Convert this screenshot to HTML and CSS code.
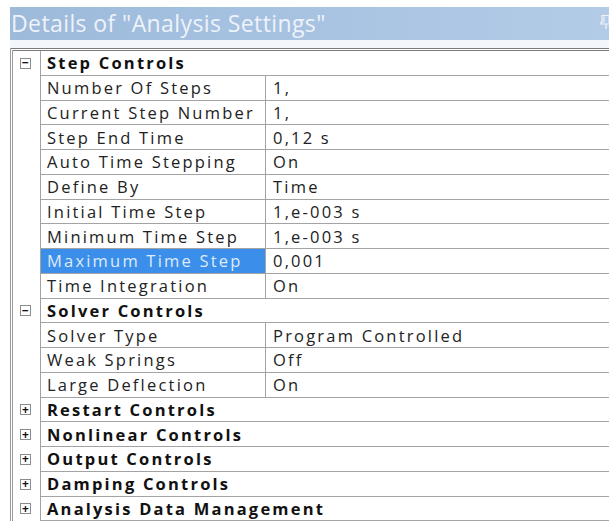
FILE: index.html
```html
<!DOCTYPE html>
<html>
<head>
<meta charset="utf-8">
<link rel="stylesheet" href="styles.css">
</head>
<body>
<div class="panel">
  <div class="titlebar">
    <span class="title">Details of "Analysis Settings"</span>
    <svg class="pin" width="14" height="16" viewBox="0 0 14 16">
      <path d="M3 1.5h7v7h2v1.5H2V8.5h1z M5 2.5v6" fill="none" stroke="#eef3fa" stroke-width="1.2"/>
      <path d="M7 10v5" stroke="#eef3fa" stroke-width="1.2"/>
    </svg>
  </div>
  <div class="strip"></div>
  <div class="grid">
    <div class="row group"><div class="exp"><span class="box">&minus;</span></div><div class="head">Step Controls</div></div>
    <div class="row"><div class="exp"></div><div class="name">Number Of Steps</div><div class="value">1,</div></div>
    <div class="row"><div class="exp"></div><div class="name">Current Step Number</div><div class="value">1,</div></div>
    <div class="row"><div class="exp"></div><div class="name">Step End Time</div><div class="value">0,12 s</div></div>
    <div class="row"><div class="exp"></div><div class="name">Auto Time Stepping</div><div class="value">On</div></div>
    <div class="row"><div class="exp"></div><div class="name">Define By</div><div class="value">Time</div></div>
    <div class="row"><div class="exp"></div><div class="name">Initial Time Step</div><div class="value">1,e-003 s</div></div>
    <div class="row"><div class="exp"></div><div class="name">Minimum Time Step</div><div class="value">1,e-003 s</div></div>
    <div class="row"><div class="exp"></div><div class="name selected">Maximum Time Step</div><div class="value">0,001</div></div>
    <div class="row"><div class="exp"></div><div class="name">Time Integration</div><div class="value">On</div></div>
    <div class="row group"><div class="exp"><span class="box">&minus;</span></div><div class="head">Solver Controls</div></div>
    <div class="row"><div class="exp"></div><div class="name">Solver Type</div><div class="value">Program Controlled</div></div>
    <div class="row"><div class="exp"></div><div class="name">Weak Springs</div><div class="value">Off</div></div>
    <div class="row"><div class="exp"></div><div class="name">Large Deflection</div><div class="value">On</div></div>
    <div class="row group"><div class="exp"><span class="box">+</span></div><div class="head">Restart Controls</div></div>
    <div class="row group"><div class="exp"><span class="box">+</span></div><div class="head">Nonlinear Controls</div></div>
    <div class="row group"><div class="exp"><span class="box">+</span></div><div class="head">Output Controls</div></div>
    <div class="row group"><div class="exp"><span class="box">+</span></div><div class="head">Damping Controls</div></div>
    <div class="row group"><div class="exp"><span class="box">+</span></div><div class="head">Analysis Data Management</div></div>
  </div>
</div>
</body>
</html>
```
FILE: styles.css
```css
html, body {
  margin: 0;
  padding: 0;
  background: #ffffff;
  overflow: hidden;
}

.panel {
  padding: 7px 0 0 10px;
  font-family: "Open Sans", "Noto Sans", sans-serif;
}

.titlebar {
  height: 33px;
  display: flex;
  align-items: center;
  justify-content: space-between;
  background: linear-gradient(90deg, #9dbadb 0%, #a8c3e2 50%, #b3cbe6 100%);
}

.title {
  font-size: 23px;
  color: #eef3f9;
  padding-left: 1px;
  letter-spacing: 0.4px;
  margin-top: -2px;
}

.pin {
  margin-right: -4px;
  margin-top: -4px;
}

.strip {
  height: 8px;
  background: #f3f6fa;
}

.grid {
  border-top: 3px double #7a7a7a;
  border-left: 3px double #9a9a9a;
}

.row {
  display: flex;
  height: 24.75px;
  font-size: 16.5px;
  letter-spacing: 2.2px;
  color: #222;
}

.exp {
  width: 28px;
  flex: none;
  border-right: 1px solid #a3a3a3;
  display: flex;
  align-items: center;
  padding-left: 7px;
  box-sizing: border-box;
}

.box {
  width: 9px;
  height: 9px;
  border: 1px solid #8c8c8c;
  display: flex;
  align-items: center;
  justify-content: center;
  font-size: 12px;
  line-height: 1;
  font-weight: 700;
  letter-spacing: 0;
  color: #111;
  background: #fff;
}

.name,
.value,
.head {
  box-sizing: border-box;
  border-bottom: 1px solid #a3a3a3;
  display: flex;
  align-items: center;
  white-space: nowrap;
}

.name {
  width: 225px;
  flex: none;
  border-right: 1px solid #a3a3a3;
  padding-left: 6px;
}

.value {
  flex: 1;
  padding-left: 7px;
}

.head {
  flex: 1;
  padding-left: 6px;
  font-weight: 700;
  color: #111;
  letter-spacing: 2.2px;
}

.selected {
  background: #3b8fea;
  color: #dfeafb;
}
```
